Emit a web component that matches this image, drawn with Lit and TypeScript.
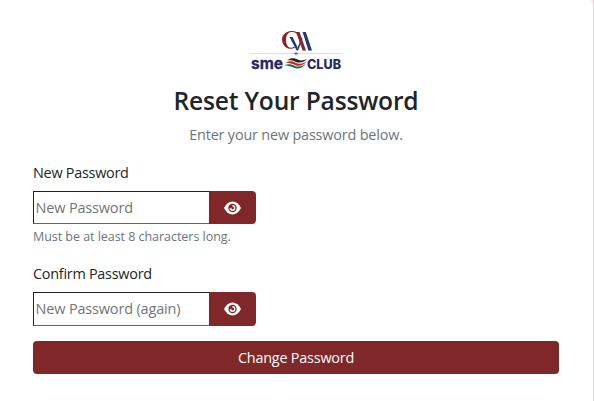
import { LitElement, html, css } from "lit";
import { customElement, property } from "lit/decorators.js";

@customElement("club-logo")
class ClubLogo extends LitElement {
  static styles = css`
    :host { display: block; width: 92px; height: 42px; }
    svg { display: block; }
    .name { font-family: Inter, "Liberation Sans", sans-serif; font-weight: 800; fill: #2b2863; }
    .sme { font-family: Inter, "DejaVu Sans", sans-serif; font-weight: 700; fill: #2b2863; stroke: #2b2863; stroke-width: .3; }
  `;
  render() {
    return html`<svg width="92" height="42" viewBox="0 0 92 42">
      <path d="M48 4.5C46.5 1.8 43.5 1.3 41 1.5C36.5 1.8 33 5.5 33 10S36 18.3 41 18.3C42.5 18.3 43.5 17.8 44.5 17" fill="none" stroke="#84262a" stroke-width="1.1" />
      <path d="M40 1.5C34.5 2.2 31.8 5.8 32.1 10S35 17.8 40 18.6C36.8 16 36 13 36 10S36.8 4 40 1.5Z" fill="#84262a" />
      <path d="M39.5 7H42.6L47.6 17.5L46.6 20.5Z" fill="#1d3c6b" />
      <path d="M46.6 20.5L51.6 7L52.4 9L48.2 20.5Z" fill="#1d3c6b" />
      <path d="M46 2H49.5L56 20.5H52.6Z" fill="#84262a" />
      <path d="M52.6 2H55.8L62 20.5H58.4Z" fill="#1d3c6b" />
      <path d="M1 23.5H91" stroke="#dedee4" stroke-width="1" />
      <path d="M46 21.7V25.3M44.2 23.5H47.8" stroke="#5b6390" stroke-width="1" />
      <text class="sme" x="1" y="38.5" font-size="16" textLength="32" lengthAdjust="spacingAndGlyphs">sme</text>
      <path d="M37 30.5C41 27.5 45 28 48 29.8C51 31 54 30.5 57 29C54 32.5 49 33.5 45.5 31.7C42 30 39.5 30 37 30.5Z" fill="#222" />
      <path d="M35.5 33C39 30.5 43 31 46 33C50 34.8 54 33 57 30.7C54 35.5 49 37 45 35C41 33 38.5 32.8 35.5 33Z" fill="#d3242c" />
      <path d="M34 35.2C38 33.5 42 34.2 45 35.9C49 37.5 53 36 56 33.5C53 38.2 48 39.5 44 37.8C40.5 36 37.5 35.2 34 35.2Z" fill="#1d7040" />
      <text class="name" x="57" y="38.5" font-size="13" textLength="34" lengthAdjust="spacingAndGlyphs">CLUB</text>
    </svg>`;
  }
}

@customElement("password-field")
class PasswordField extends LitElement {
  @property() label = "";
  @property() placeholder = "";
  @property() hint = "";
  static styles = css`
    :host { display: block; }
    .label { display: block; height: 24px; line-height: 24px; margin-bottom: 6px; color: #212529; font-size: 14.4px; letter-spacing: -.25px; }
    .group { display: flex; height: var(--group-height, 33px); width: 223px; }
    input { box-sizing: border-box; width: 176px; margin: 0; padding: 0 2px 1px 1.5px; border: 1px solid #222; border-right: 0; border-bottom-color: #666; border-radius: 0; outline: 0; background: #fff; color: #212529; font: inherit; font-size: 14.5px; letter-spacing: -.17px; }
    input::placeholder { color: #757575; opacity: 1; }
    button { width: 47px; padding: 0; border: 0; border-radius: 0 4px 4px 0; background: #80272a; display: flex; align-items: center; justify-content: center; }
    .hint { height: 18px; line-height: 18px; margin-top: 4px; color: #6c757d; font-size: 12.5px; white-space: nowrap; letter-spacing: -.04px; }
  `;
  render() {
    return html`<label class="label">${this.label}</label>
      <div class="group">
        <input type="password" placeholder=${this.placeholder} />
        <button type="button" aria-label="Show password">
          <svg width="17" height="14" viewBox="0 0 17 14">
            <path d="M0 7C2 3 5 .6 8.5 .6S15 3 17 7C15 11 12 13.4 8.5 13.4S2 11 0 7Z" fill="#fff" />
            <circle cx="8.5" cy="7" r="4.2" fill="#80272a" />
            <path d="M8.5 4.1A2.9 2.9 0 1 1 5.6 7Q8.5 8 8.5 4.1Z" fill="#fff" />
            <circle cx="8.7" cy="7" r="1.4" fill="#80272a" />
          </svg>
        </button>
      </div>
      ${this.hint ? html`<div class="hint">${this.hint}</div>` : ""}`;
  }
}

@customElement("app-root")
class AppRoot extends LitElement {
  static styles = css`
    :host { display: block; height: 401px; background: #efd9df; font-family: "Open Sans", "Noto Sans", sans-serif; overflow: hidden; }
    .card { box-sizing: border-box; height: 401px; padding: 30px 34px 0 33px; background: #fff; border-right: 1px solid #dcdcdc; border-radius: 0 4px 0 0; display: flex; flex-direction: column; }
    .logo { align-self: center; }
    h1 { margin: 12px 0 0; height: 34px; line-height: 34px; text-align: center; font-size: 24.6px; font-weight: 600; letter-spacing: -.2px; color: #212529; white-space: nowrap; }
    .lead { margin: 5px 0 0; height: 24px; line-height: 24px; text-align: center; font-size: 14.4px; letter-spacing: -.17px; color: #6c757d; }
    .first { margin-top: 14px; }
    .second { margin-top: 16px; --group-height: 34px; }
    .submit { margin-top: 15px; height: 33px; border: 0; border-radius: 4px; background: #80272a; color: #fff; font: inherit; font-size: 14.4px; letter-spacing: -.2px; }
  `;
  render() {
    return html`<main class="card">
      <club-logo class="logo"></club-logo>
      <h1>Reset Your Password</h1>
      <p class="lead">Enter your new password below.</p>
      <password-field class="first" label="New Password" placeholder="New Password" hint="Must be at least 8 characters long."></password-field>
      <password-field class="second" label="Confirm Password" placeholder="New Password (again)"></password-field>
      <button class="submit" type="button">Change Password</button>
    </main>`;
  }
}
